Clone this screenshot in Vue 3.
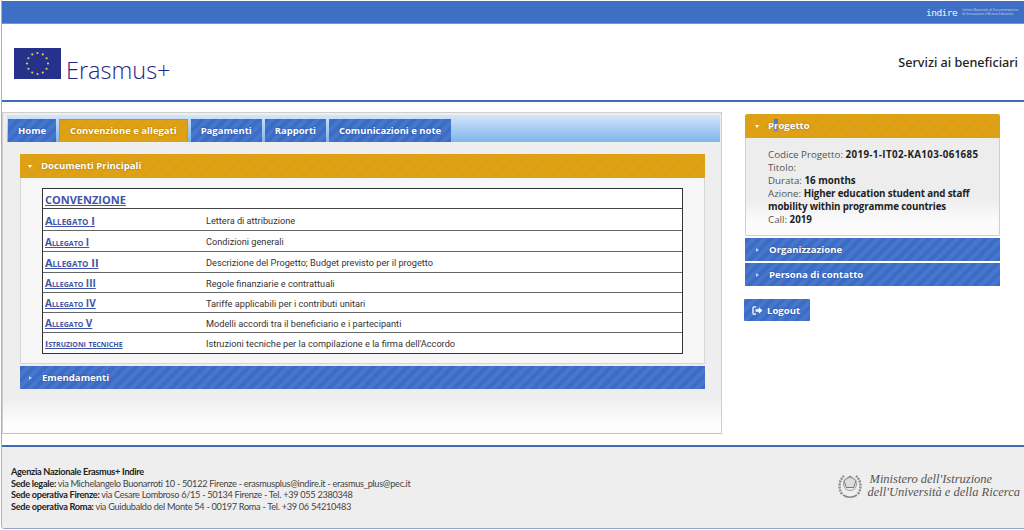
<template>
  <div class="page">
    <div class="topbar">
      <span class="indire">indire</span>
      <span class="indire-sub">Istituto Nazionale di Documentazione<br />di Innovazione e Ricerca Educativa</span>
    </div>

    <header class="header">
      <div class="brand">
        <svg class="flag" viewBox="0 0 47 31" width="47" height="31">
          <rect width="47" height="31" fill="#26318c" />
          <circle v-for="s in stars" :key="s.id" :cx="s.x" :cy="s.y" r="1.1" fill="#d9d34a" />
        </svg>
        <span class="erasmus">Erasmus+</span>
      </div>
      <div class="service">Servizi ai beneficiari</div>
    </header>

    <main class="content">
      <section class="panel">
        <nav class="tabs">
          <a v-for="t in tabs" :key="t.label" class="tab" :class="{ active: t.active }">{{ t.label }}</a>
        </nav>
        <div class="panel-body">
          <div class="acc-head orange">
            <span class="caret-down"></span>
            Documenti Principali
          </div>
          <div class="acc-body">
            <div class="doc-table">
              <div class="doc-first"><a class="conv">CONVENZIONE</a></div>
              <div v-for="d in docs" :key="d.text" class="doc-row" :style="{ height: d.h + 'px' }">
                <a class="doc-link" :class="d.size">{{ d.name }}</a>
                <span class="doc-text">{{ d.text }}</span>
              </div>
            </div>
          </div>
          <div class="acc-head blue emend">
            <span class="caret-right"></span>
            Emendamenti
          </div>
        </div>
      </section>

      <aside class="side">
        <div class="acc-head orange rounded">
          <span class="caret-down"></span>
          <span>P<span class="mark">r</span>ogetto</span>
        </div>
        <div class="info">
          <div>Codice Progetto: <b class="code">2019-1-IT02-KA103-061685</b></div>
          <div>Titolo:</div>
          <div>Durata: <b>16 months</b></div>
          <div>Azione: <b class="action">Higher education student and staff mobility within programme countries</b></div>
          <div>Call: <b>2019</b></div>
        </div>
        <div class="acc-head blue side-item">
          <span class="caret-right"></span>
          Organizzazione
        </div>
        <div class="acc-head blue side-item second">
          <span class="caret-right"></span>
          Persona di contatto
        </div>
        <button class="logout">
          <svg viewBox="0 0 12 10" width="11" height="9">
            <path d="M4.5 1H2a1 1 0 0 0-1 1v6a1 1 0 0 0 1 1h2.5" fill="none" stroke="#fff" stroke-width="1.4" />
            <path d="M4 3.7h3.5V1.4L11.6 5 7.5 8.6V6.3H4z" fill="#fff" />
          </svg>
          Logout
        </button>
      </aside>
    </main>

    <footer class="footer">
      <div class="address">
        <div><b>Agenzia Nazionale Erasmus+ Indire</b></div>
        <div><b>Sede legale:</b> via Michelangelo Buonarroti 10 - 50122 Firenze - erasmusplus@indire.it - erasmus_plus@pec.it</div>
        <div><b>Sede operativa Firenze:</b> via Cesare Lombroso 6/15 - 50134 Firenze - Tel. +39 055 2380348</div>
        <div><b>Sede operativa Roma:</b> via Guidubaldo del Monte 54 - 00197 Roma - Tel. +39 06 54210483</div>
      </div>
      <div class="ministry">
        <svg class="emblem" viewBox="0 0 24 26" width="24" height="26">
          <path d="M4 21C0 15 1 7 6 3M20 21c4-6 3-14-2-18" fill="none" stroke="#8b8b8b" stroke-width="2.4" stroke-dasharray="2 1" />
          <path d="M12 3l6 4.5-2.3 7H8.3L6 7.5z" fill="#dcdcdc" stroke="#777" stroke-width="1" />
          <circle cx="12" cy="11" r="6.5" fill="none" stroke="#999" stroke-width="1" />
          <path d="M5 22c4 3 10 3 14 0" fill="none" stroke="#888" stroke-width="1.6" />
        </svg>
        <div class="ministry-text">
          <div class="m1">Ministero dell'Istruzione</div>
          <div>dell'Università e della Ricerca</div>
        </div>
      </div>
    </footer>
  </div>
</template>

<script setup>
const tabs = [
  { label: 'Home' },
  { label: 'Convenzione e allegati', active: true },
  { label: 'Pagamenti' },
  { label: 'Rapporti' },
  { label: 'Comunicazioni e note' }
]

const docs = [
  { name: 'Allegato I', text: 'Lettera di attribuzione', h: 22, size: 'big' },
  { name: 'Allegato I', text: 'Condizioni generali', h: 21, size: 'mid' },
  { name: 'Allegato II', text: 'Descrizione del Progetto; Budget previsto per il progetto', h: 21, size: 'big' },
  { name: 'Allegato III', text: 'Regole finanziarie e contrattuali', h: 20, size: 'mid' },
  { name: 'Allegato IV', text: 'Tariffe applicabili per i contributi unitari', h: 20, size: 'mid' },
  { name: 'Allegato V', text: 'Modelli accordi tra il beneficiario e i partecipanti', h: 20, size: 'mid' },
  { name: 'Istruzioni tecniche', text: "Istruzioni tecniche per la compilazione e la firma dell'Accordo", h: 20, size: 'tiny' }
]

const stars = Array.from({ length: 12 }, (_, i) => ({
  id: i,
  x: 23.5 + 10.5 * Math.cos((i * Math.PI) / 6),
  y: 15.5 + 10.5 * Math.sin((i * Math.PI) / 6)
}))
</script>

<style scoped>
.page {
  width: 1023px;
  height: 529px;
  margin-left: 1px;
  box-sizing: border-box;
  border-left: 1px solid #9fb0d2;
  border-bottom: 1px solid #8fa5cc;
  border-bottom-left-radius: 4px;
  display: flex;
  flex-direction: column;
  font-family: "Open Sans", sans-serif;
  color: #333;
  background: #fff;
  overflow: hidden;
}

.topbar {
  height: 22px;
  flex: none;
  margin-top: 1px;
  background: #3f6fc4;
  border-bottom: 1px solid #6f97d8;
  display: flex;
  justify-content: flex-end;
  align-items: center;
  gap: 5px;
  padding-right: 6px;
  color: #fff;
}
.indire {
  font-family: "DejaVu Sans Mono", monospace;
  font-size: 9.5px;
  letter-spacing: -0.5px;
  color: #f2f5fb;
}
.indire-sub {
  font-size: 3.2px;
  line-height: 4px;
  color: #c9d7ef;
}

.header {
  height: 76px;
  flex: none;
  border-bottom: 2px solid #3a6db5;
  display: flex;
  justify-content: space-between;
  align-items: center;
  padding: 0 6px 0 12px;
  box-sizing: content-box;
}
.brand {
  display: flex;
  align-items: flex-end;
  gap: 5px;
  margin-top: 2px;
}
.flag {
  display: block;
}
.erasmus {
  font-size: 23.5px;
  line-height: 24px;
  font-weight: 300;
  color: #1f2580;
  margin-bottom: -3px;
}
.service {
  font-family: "Noto Sans", sans-serif;
  font-size: 12.6px;
  font-weight: 500;
  color: #222;
}

.content {
  flex: 1;
  display: flex;
  align-items: flex-start;
  padding-top: 10px;
}

.panel {
  width: 720px;
  height: 322px;
  box-sizing: border-box;
  flex: none;
  border: 1px solid #cfcfcf;
  border-bottom-color: #b9c4d8;
  padding: 2px 1px 0 4px;
  background: linear-gradient(#eeeeee 0, #eeeeee 285px, #fdfdfd 310px);
}
.tabs {
  height: 27px;
  background: linear-gradient(#d3e6fa, #7fb5ec);
  display: flex;
  align-items: flex-end;
  padding-left: 1px;
  gap: 3px;
}
.tab {
  height: 23px;
  line-height: 23px;
  padding: 0 10px;
  font-size: 9.5px;
  font-weight: 700;
  color: #fff;
  text-shadow: 0 0 2px #23478f;
  box-sizing: border-box;
  background: repeating-linear-gradient(-45deg, #3d6cc4 0 4px, #4677cd 4px 8px);
}
.tab.active {
  background: repeating-linear-gradient(-45deg, #e2a20f 0 4px, #daa01c 4px 8px);
  border: 1px solid #a79566;
  border-bottom: none;
  line-height: 21px;
  text-shadow: 0 0 2px #9c6f00;
}

.panel-body {
  padding: 12px 15px 0 13px;
}
.acc-head {
  height: 24px;
  line-height: 24px;
  font-size: 9.6px;
  font-weight: 700;
  color: #fff;
  display: flex;
  align-items: center;
  gap: 7px;
  padding-left: 8px;
  box-sizing: border-box;
}
.orange {
  background: repeating-linear-gradient(-45deg, #e2a20f 0 4px, #daa01c 4px 8px);
  text-shadow: 0 0 2px #9c6f00;
}
.blue {
  background: repeating-linear-gradient(-45deg, #3d6cc4 0 4px, #4677cd 4px 8px);
  text-shadow: 0 0 2px #23478f;
}
.caret-down {
  width: 0;
  height: 0;
  border-left: 2.5px solid transparent;
  border-right: 2.5px solid transparent;
  border-top: 3px solid #fff;
  margin-right: 2px;
}
.caret-right {
  width: 0;
  height: 0;
  border-top: 2.5px solid transparent;
  border-bottom: 2.5px solid transparent;
  border-left: 3px solid #b9d0ef;
  margin-left: 1px;
  margin-right: 3px;
}

.acc-body {
  height: 186px;
  box-sizing: border-box;
  padding: 10px 21px 0 21px;
  background: #f6f6f6;
  border: 1px solid #d6d6d6;
  border-top: none;
}
.doc-table {
  border: 1px solid #333;
  background: #fff;
}
.doc-first {
  height: 19px;
  line-height: 19px;
  padding-left: 2px;
  border-bottom: 1px solid #444;
  box-sizing: content-box;
}
.conv {
  font-size: 11px;
  font-weight: 700;
  color: #3f55a8;
  text-decoration: underline;
}
.doc-row {
  display: flex;
  align-items: center;
  padding: 1px 0 0 2px;
  border-bottom: 1px solid #666;
  box-sizing: border-box;
}
.doc-row:last-child {
  border-bottom: none;
}
.doc-link {
  width: 161px;
  flex: none;
  font-weight: 700;
  font-variant: small-caps;
  color: #3f55a8;
  text-decoration: underline;
}
.doc-link.big {
  font-size: 11px;
}
.doc-link.mid {
  font-size: 10px;
}
.doc-link.tiny {
  font-size: 9.5px;
}
.doc-text {
  font-family: Roboto, sans-serif;
  font-size: 9.2px;
  color: #333;
}
.emend {
  margin-top: 2px;
  height: 23px;
}

.side {
  width: 255px;
  margin-left: 23px;
  padding-top: 2px;
}
.side .acc-head {
  padding-left: 10px;
}
.rounded {
  border-radius: 2px 2px 0 0;
}
.mark {
  background: linear-gradient(#4a6fd0, #7d8fd6);
}
.info {
  height: 98px;
  box-sizing: border-box;
  padding: 10px 20px 0 22px;
  font-size: 9.75px;
  line-height: 13px;
  color: #555;
  border: 1px solid #cfcfcf;
  border-top: none;
  border-radius: 0 0 2px 2px;
  background: linear-gradient(#ededed 0, #ededed 62%, #fbfbfb 85%);
}
.info b {
  color: #222;
}
.info .code {
  letter-spacing: 0.38px;
}
.info .action {
  letter-spacing: -0.14px;
}
.side-item {
  margin-top: 2px;
  height: 23px;
}
.logout {
  display: flex;
  align-items: center;
  gap: 4px;
  margin: 13px 0 0 -1px;
  width: 66px;
  height: 22px;
  padding: 0 0 0 8px;
  border: none;
  border-radius: 1px;
  font-family: inherit;
  font-size: 9.6px;
  font-weight: 700;
  color: #fff;
  text-shadow: 0 0 2px #23478f;
  background: repeating-linear-gradient(-45deg, #3d6cc4 0 4px, #4677cd 4px 8px);
}

.footer {
  height: 83px;
  flex: none;
  border-top: 2px solid #3a6db5;
  background: #eeeeee;
  display: flex;
  justify-content: space-between;
  align-items: flex-start;
  padding: 19px 4px 0 9px;
  box-sizing: border-box;
}
.address {
  font-family: Lato, sans-serif;
  font-size: 9.2px;
  letter-spacing: -0.3px;
  line-height: 11.7px;
  color: #444;
}
.address b {
  color: #222;
  font-weight: 700;
}
.ministry {
  display: flex;
  align-items: center;
  gap: 5px;
  margin-top: 7px;
}
.emblem {
  display: block;
}
.ministry-text {
  font-family: "Liberation Serif", serif;
  font-style: italic;
  font-size: 12.5px;
  line-height: 13px;
  color: #555;
}
.m1 {
  padding-left: 2px;
}
</style>
